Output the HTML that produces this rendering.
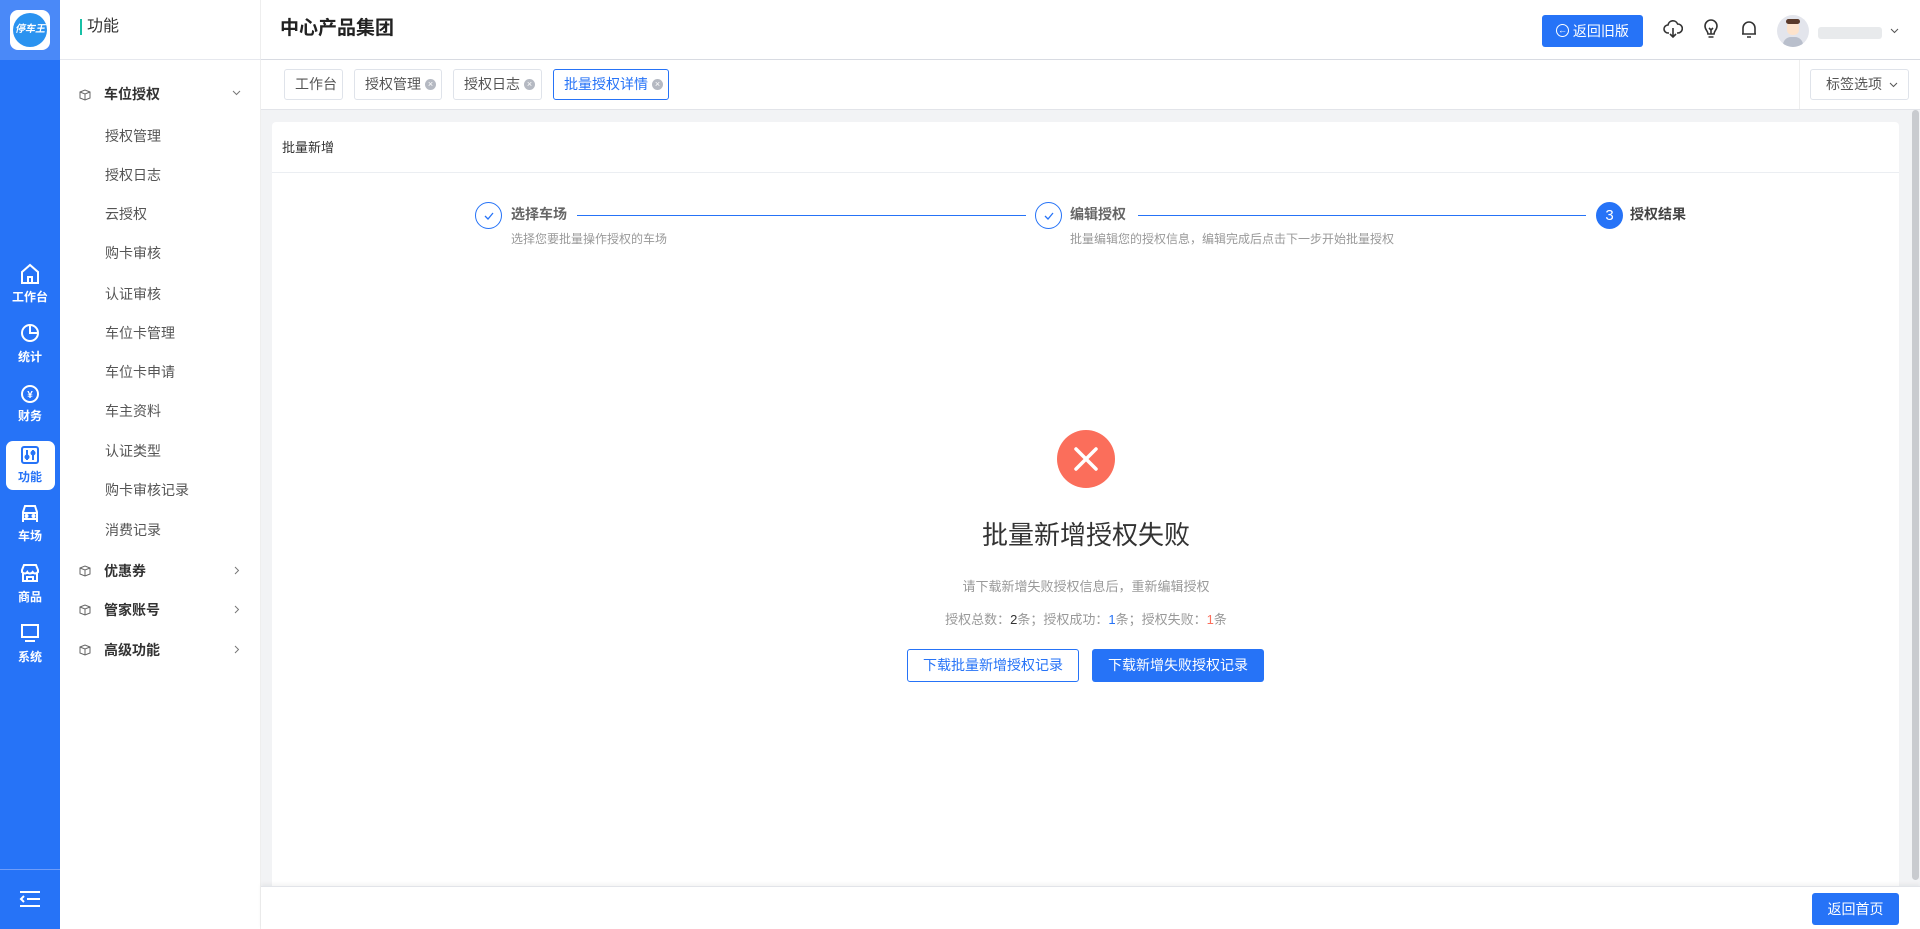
<!DOCTYPE html>
<html><head><meta charset="utf-8"><style>
*{margin:0;padding:0;box-sizing:border-box}
body{width:1920px;height:929px;overflow:hidden;font-family:"Liberation Sans","Noto Sans CJK SC",sans-serif;background:#fff;position:relative;color:#333}
.a{position:absolute}
.rail{left:0;top:0;width:60px;height:929px;background:#2673f7}
.logo{left:0;top:0;width:60px;height:60px;background:#4a89f8}
.ri{left:0;width:60px;text-align:center;color:#fff;font-size:12px;font-weight:bold}
.side{left:60px;top:0;width:201px;height:929px;background:#fff;border-right:1px solid #eee}
.mi{left:105px;font-size:14px;color:#555;line-height:20px}
.mg{left:104px;font-size:14px;color:#333;font-weight:bold;line-height:20px}
.tab{top:69px;height:31px;border:1px solid #dfe3ea;border-radius:3px;font-size:14px;color:#555;line-height:29px;padding-left:10px;background:#fff}
.x{display:inline-block;width:11px;height:11px;border-radius:50%;background:#b5b9c2;color:#fff;font-size:9px;line-height:11px;text-align:center;vertical-align:middle;margin-left:4px;margin-top:-2px}
.sc{width:27px;height:27px;border:1px solid #2673f7;border-radius:50%;top:202px;color:#2673f7;text-align:center;line-height:25px;font-size:13px}
.st{top:204px;font-size:14px;color:#666;font-weight:bold;line-height:20px}
.sd{top:230px;font-size:12px;color:#999;line-height:18px}
</style></head><body>
<div class="a rail"></div>
<div class="a logo"><div class="a" style="left:10px;top:10px;width:40px;height:40px;background:#fff;border-radius:8px"><div class="a" style="left:3px;top:3px;width:34px;height:34px;border-radius:50%;background:#2a93f0;color:#fff;font-size:10px;font-weight:bold;font-style:italic;line-height:34px;text-align:center">停车王</div></div></div>
<svg class="a" style="left:20px;top:263px" width="20" height="22" viewBox="0 0 20 22" fill="none" stroke="#fff" stroke-width="2"><path d="M2 9L10 2l8 7v11H2z M8 20v-6h4v6"/></svg>
<div class="a ri" style="top:288px">工作台</div>
<svg class="a" style="left:20px;top:323px" width="20" height="20" viewBox="0 0 20 20" fill="none" stroke="#fff" stroke-width="2"><circle cx="10" cy="10" r="8"/><path d="M10 2v8h8"/></svg>
<div class="a ri" style="top:348px">统计</div>
<svg class="a" style="left:20px;top:384px" width="20" height="20" viewBox="0 0 20 20"><circle cx="10" cy="10" r="8" fill="none" stroke="#fff" stroke-width="2"/><text x="10" y="14" fill="#fff" font-size="10" font-weight="bold" text-anchor="middle" font-family="Liberation Sans">¥</text></svg>
<div class="a ri" style="top:407px">财务</div>
<div class="a" style="left:6px;top:441px;width:49px;height:49px;background:#fff;border-radius:7px"></div>
<svg class="a" style="left:20px;top:445px" width="20" height="20" viewBox="0 0 20 20" fill="none" stroke="#2673f7" stroke-width="2"><rect x="2" y="2" width="16" height="16" rx="2"/><path d="M7 5v10M13 5v10"/><circle cx="7" cy="12" r="1.5"/><circle cx="13" cy="8" r="1.5"/></svg>
<div class="a ri" style="top:468px;color:#2673f7">功能</div>
<svg class="a" style="left:20px;top:504px" width="20" height="20" viewBox="0 0 20 20" fill="none" stroke="#fff" stroke-width="2"><path d="M3 18V8l2-6h10l2 6v10M3 9h14M3 15h14"/><circle cx="6.5" cy="12" r="1" fill="#fff"/><circle cx="13.5" cy="12" r="1" fill="#fff"/></svg>
<div class="a ri" style="top:527px">车场</div>
<svg class="a" style="left:20px;top:563px" width="20" height="20" viewBox="0 0 20 20" fill="none" stroke="#fff" stroke-width="2"><path d="M2 7l2-5h12l2 5v2c-2 2-4 2-5.3 0-1.4 2-4.3 2-5.4 0C6 11 4 11 2 9zM3 10v8h14v-8M7 18v-4h6v4"/></svg>
<div class="a ri" style="top:588px">商品</div>
<svg class="a" style="left:20px;top:623px" width="20" height="20" viewBox="0 0 20 20" fill="none" stroke="#fff" stroke-width="2"><rect x="2" y="2" width="16" height="12"/><path d="M5 18h10"/></svg>
<div class="a ri" style="top:648px">系统</div>
<div class="a" style="left:0;top:869px;width:60px;height:1px;background:#6f9cf9"></div>
<svg class="a" style="left:19px;top:890px" width="22" height="18" viewBox="0 0 22 18" fill="none" stroke="#fff" stroke-width="2"><path d="M1 2h20M8 9h13M1 16h20M5 6L2 9l3 3"/></svg>

<div class="a side"></div>
<div class="a" style="left:80px;top:19px;width:2px;height:16px;background:#17c0a6"></div>
<div class="a" style="left:87px;top:16px;font-size:16px;color:#333;line-height:22px">功能</div>
<div class="a" style="left:60px;top:59px;width:201px;height:1px;background:#e6e8ee"></div>
<svg class="a" style="left:79px;top:89px" width="12" height="12" viewBox="0 0 12 12" fill="none" stroke="#666"><path d="M1 3l5-2 5 2v6l-5 2-5-2zM1 3l5 2 5-2M6 5v6"/></svg>
<div class="a mg" style="top:84px">车位授权</div>
<svg class="a" style="left:232px;top:90px" width="9" height="6" viewBox="0 0 9 6" fill="none" stroke="#777"><path d="M1 1l3.5 3.5L8 1"/></svg>
<div class="a mi" style="top:126px">授权管理</div>
<div class="a mi" style="top:165px">授权日志</div>
<div class="a mi" style="top:204px">云授权</div>
<div class="a mi" style="top:243px">购卡审核</div>
<div class="a mi" style="top:284px">认证审核</div>
<div class="a mi" style="top:323px">车位卡管理</div>
<div class="a mi" style="top:362px">车位卡申请</div>
<div class="a mi" style="top:401px">车主资料</div>
<div class="a mi" style="top:441px">认证类型</div>
<div class="a mi" style="top:480px">购卡审核记录</div>
<div class="a mi" style="top:520px">消费记录</div>
<svg class="a" style="left:79px;top:565px" width="12" height="12" viewBox="0 0 12 12" fill="none" stroke="#666"><path d="M1 3l5-2 5 2v6l-5 2-5-2zM1 3l5 2 5-2M6 5v6"/></svg>
<div class="a mg" style="top:561px">优惠券</div>
<svg class="a" style="left:234px;top:566px" width="6" height="9" viewBox="0 0 6 9" fill="none" stroke="#777"><path d="M1 1l3.5 3.5L1 8"/></svg>
<svg class="a" style="left:79px;top:604px" width="12" height="12" viewBox="0 0 12 12" fill="none" stroke="#666"><path d="M1 3l5-2 5 2v6l-5 2-5-2zM1 3l5 2 5-2M6 5v6"/></svg>
<div class="a mg" style="top:600px">管家账号</div>
<svg class="a" style="left:234px;top:605px" width="6" height="9" viewBox="0 0 6 9" fill="none" stroke="#777"><path d="M1 1l3.5 3.5L1 8"/></svg>
<svg class="a" style="left:79px;top:644px" width="12" height="12" viewBox="0 0 12 12" fill="none" stroke="#666"><path d="M1 3l5-2 5 2v6l-5 2-5-2zM1 3l5 2 5-2M6 5v6"/></svg>
<div class="a mg" style="top:640px">高级功能</div>
<svg class="a" style="left:234px;top:645px" width="6" height="9" viewBox="0 0 6 9" fill="none" stroke="#777"><path d="M1 1l3.5 3.5L1 8"/></svg>

<!-- header -->
<div class="a" style="left:280px;top:16px;font-size:19px;font-weight:bold;color:#222;line-height:26px">中心产品集团</div>
<div class="a" style="left:1542px;top:15px;width:101px;height:32px;background:#2673f7;border-radius:3px;color:#fff;font-size:14px;line-height:32px;text-align:center"><span style="display:inline-block;width:13px;height:13px;border:1.5px solid #fff;border-radius:50%;font-size:9px;line-height:10px;vertical-align:middle;margin-top:-3px">←</span> 返回旧版</div>
<svg class="a" style="left:1663px;top:19px" width="20" height="20" viewBox="0 0 20 20" fill="none" stroke="#333" stroke-width="1.6"><path d="M6 14H5a4 4 0 010-8 5 5 0 019.6-1A4 4 0 0115 14h-1M10 9v9M7 15l3 3 3-3"/></svg>
<svg class="a" style="left:1701px;top:19px" width="20" height="20" viewBox="0 0 20 20" fill="none" stroke="#333" stroke-width="1.6"><path d="M7 15c0-3-3-4-3-8a6 6 0 0112 0c0 4-3 5-3 8zM7.5 18h5M8 9l2 2 2-2M10 11v4"/></svg>
<svg class="a" style="left:1739px;top:19px" width="20" height="20" viewBox="0 0 20 20" fill="none" stroke="#333" stroke-width="1.6"><path d="M4 15V9a6 6 0 0112 0v6zM3 15h14M8 18h4"/></svg>
<div class="a" style="left:1777px;top:15px;width:32px;height:32px;border-radius:50%;background:#e3e5ec;overflow:hidden"><div class="a" style="left:10px;top:6px;width:12px;height:14px;background:#fde3cc;border-radius:5px"></div><div class="a" style="left:9px;top:4px;width:14px;height:5px;background:#5a3a2b;border-radius:3px"></div><div class="a" style="left:6px;top:22px;width:20px;height:12px;background:#b9bfcc;border-radius:8px 8px 0 0"></div></div>
<div class="a" style="left:1818px;top:27px;width:64px;height:12px;background:#e8eaec;border-radius:3px"></div>
<svg class="a" style="left:1890px;top:28px" width="9" height="6" viewBox="0 0 9 6" fill="none" stroke="#555"><path d="M1 1l3.5 3.5L8 1"/></svg>
<div class="a" style="left:261px;top:59px;width:1659px;height:1px;background:#d8dbe2"></div>

<!-- tabs -->
<div class="a tab" style="left:284px;width:59px">工作台</div>
<div class="a tab" style="left:354px;width:88px">授权管理<span class="x">×</span></div>
<div class="a tab" style="left:453px;width:89px">授权日志<span class="x">×</span></div>
<div class="a tab" style="left:553px;width:116px;border-color:#2673f7;color:#2673f7">批量授权详情<span class="x">×</span></div>
<div class="a" style="left:1799px;top:60px;width:1px;height:50px;background:#eee"></div>
<div class="a tab" style="left:1810px;width:99px;color:#555;padding-left:15px">标签选项 <svg width="9" height="6" viewBox="0 0 9 6" fill="none" stroke="#555" style="margin-left:3px;vertical-align:middle"><path d="M1 1l3.5 3.5L8 1"/></svg></div>

<!-- content -->
<div class="a" style="left:261px;top:109px;width:1659px;height:777px;background:#f2f3f5;border-top:1px solid #e2e4e9"></div>
<div class="a" style="left:272px;top:122px;width:1627px;height:770px;background:#fff;border-radius:4px"></div>
<div class="a" style="left:282px;top:138px;font-size:13px;color:#333;line-height:20px">批量新增</div>
<div class="a" style="left:272px;top:172px;width:1627px;height:1px;background:#ebeef2"></div>
<div class="a" style="left:1912px;top:110px;width:7px;height:770px;background:#c9cbcf;border-radius:4px"></div>

<div class="a sc" style="left:475px"><svg width="12" height="10" viewBox="0 0 12 10" fill="none" stroke="#2673f7" stroke-width="1.3" style="margin-top:8px"><path d="M2 5l3 3 5-6"/></svg></div>
<div class="a st" style="left:511px">选择车场</div>
<div class="a sd" style="left:511px">选择您要批量操作授权的车场</div>
<div class="a" style="left:577px;top:215px;width:449px;height:1px;background:#2673f7"></div>
<div class="a sc" style="left:1035px"><svg width="12" height="10" viewBox="0 0 12 10" fill="none" stroke="#2673f7" stroke-width="1.3" style="margin-top:8px"><path d="M2 5l3 3 5-6"/></svg></div>
<div class="a st" style="left:1070px">编辑授权</div>
<div class="a sd" style="left:1070px">批量编辑您的授权信息，编辑完成后点击下一步开始批量授权</div>
<div class="a" style="left:1138px;top:215px;width:448px;height:1px;background:#2673f7"></div>
<div class="a sc" style="left:1596px;background:#2673f7;color:#fff;font-size:15px">3</div>
<div class="a st" style="left:1630px;color:#444">授权结果</div>

<div class="a" style="left:1057px;top:430px;width:58px;height:58px;border-radius:50%;background:#fb6e5b"></div>
<svg class="a" style="left:1057px;top:430px" width="58" height="58" viewBox="0 0 58 58" stroke="#fff" stroke-width="3.5" stroke-linecap="round"><path d="M19 19l20 20M39 19L19 39"/></svg>
<div class="a" style="left:786px;top:518px;width:600px;text-align:center;font-size:26px;color:#333;line-height:34px">批量新增授权失败</div>
<div class="a" style="left:786px;top:577px;width:600px;text-align:center;font-size:13px;color:#999;line-height:20px">请下载新增失败授权信息后，重新编辑授权</div>
<div class="a" style="left:786px;top:610px;width:600px;text-align:center;font-size:13px;color:#999;line-height:20px">授权总数：<span style="color:#333">2</span>条；授权成功：<span style="color:#2673f7">1</span>条；授权失败：<span style="color:#fb6e5b">1</span>条</div>
<div class="a" style="left:907px;top:649px;width:172px;height:33px;border:1px solid #2673f7;border-radius:3px;color:#2673f7;font-size:14px;line-height:31px;text-align:center">下载批量新增授权记录</div>
<div class="a" style="left:1092px;top:649px;width:172px;height:33px;background:#2673f7;border-radius:3px;color:#fff;font-size:14px;line-height:33px;text-align:center">下载新增失败授权记录</div>

<!-- footer -->
<div class="a" style="left:261px;top:886px;width:1659px;height:43px;background:#fff;border-top:1px solid #e2e4e9;box-shadow:0 -2px 4px rgba(0,0,0,.05)"></div>
<div class="a" style="left:1812px;top:893px;width:87px;height:32px;background:#2673f7;border-radius:3px;color:#fff;font-size:14px;line-height:32px;text-align:center">返回首页</div>
</body></html>
